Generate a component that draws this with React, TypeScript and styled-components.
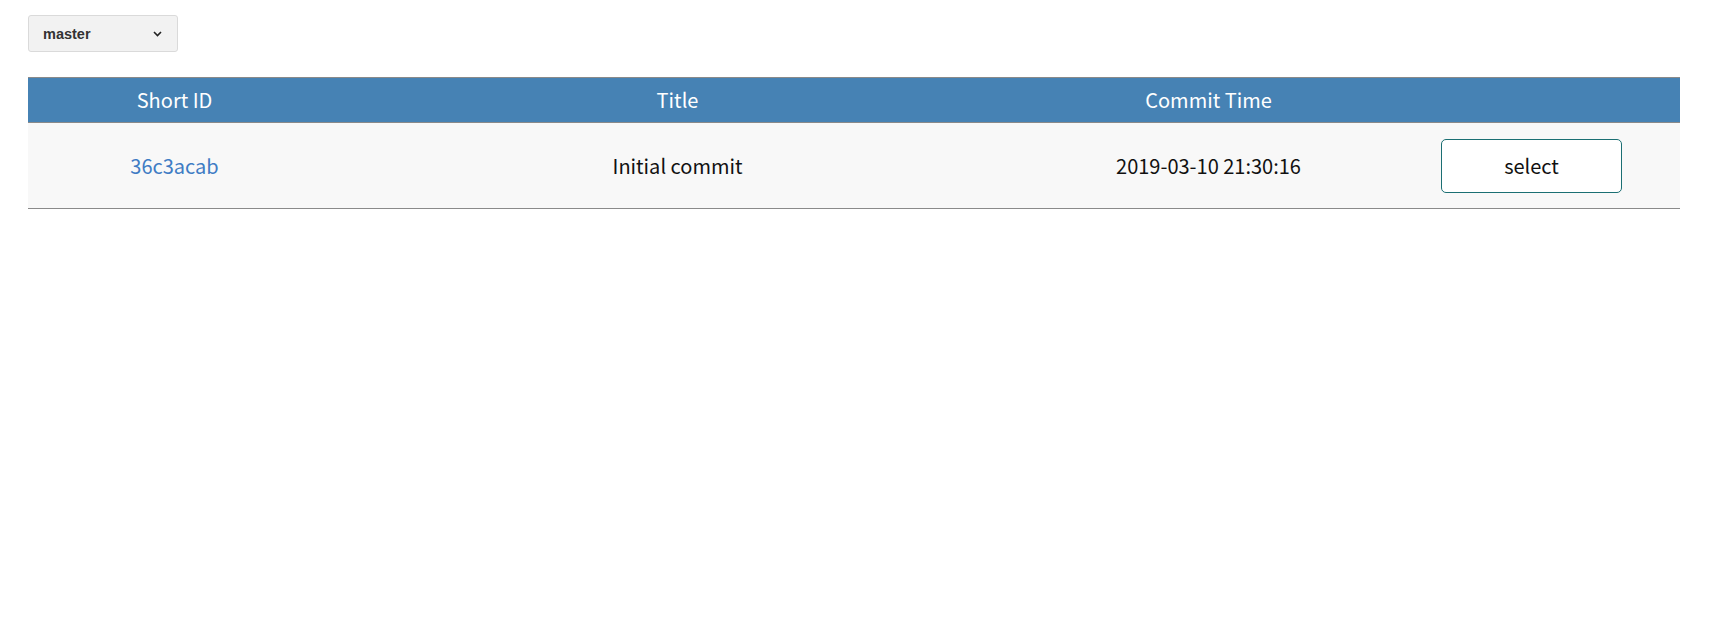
import React from "react";
import styled, { createGlobalStyle } from "styled-components";

const GlobalStyle = createGlobalStyle`
  html, body {
    margin: 0;
    padding: 0;
    background: #ffffff;
  }
  body {
    font-family: "Noto Sans CJK SC", "Noto Sans", sans-serif;
  }
`;

const COLUMNS = "293px 713px 349px 1fr";

const Page = styled.div`
  padding: 15px 34px 0 28px;
`;

const BranchSelect = styled.div`
  box-sizing: border-box;
  width: 150px;
  height: 37px;
  display: flex;
  align-items: center;
  justify-content: space-between;
  padding: 0 15px 0 14px;
  background: #f2f2f2;
  border: 1px solid #dadada;
  border-radius: 3px;
  font-family: "Liberation Sans", Arial, sans-serif;
  font-weight: 700;
  font-size: 14.5px;
  color: #333333;
`;

const Table = styled.div`
  margin-top: 25px;
  border-top: 1px solid #8a8a8a;
`;

const HeaderRow = styled.div`
  display: grid;
  grid-template-columns: ${COLUMNS};
  height: 44px;
  align-items: center;
  background: #4682b4;
  border-bottom: 1px solid #8a8a8a;
`;

const HeaderCell = styled.div`
  text-align: center;
  color: #ffffff;
  font-size: 20px;
  line-height: 1;
`;

const BodyRow = styled.div`
  display: grid;
  grid-template-columns: ${COLUMNS};
  height: 85px;
  align-items: center;
  background: #f8f8f8;
  border-bottom: 1px solid #8a8a8a;
`;

const Cell = styled.div<{ $link?: boolean }>`
  display: flex;
  justify-content: center;
  align-items: center;
  font-size: 20px;
  line-height: 1;
  color: ${(p) => (p.$link ? "#3f7cc4" : "#111111")};
`;

const SelectButton = styled.button`
  box-sizing: border-box;
  width: 181px;
  height: 54px;
  background: #ffffff;
  border: 1px solid #1b6f73;
  border-radius: 5px;
  font-family: "Noto Sans CJK SC", "Noto Sans", sans-serif;
  font-size: 20px;
  color: #111111;
  cursor: pointer;
`;

const Chevron = () => (
  <svg width="9" height="6" viewBox="0 0 9 6" fill="none">
    <path d="M1 1l3.5 3.5L8 1" stroke="#222" strokeWidth="1.6" />
  </svg>
);

export default function App() {
  return (
    <Page>
      <GlobalStyle />
      <BranchSelect>
        <span>master</span>
        <Chevron />
      </BranchSelect>
      <Table>
        <HeaderRow>
          <HeaderCell>Short ID</HeaderCell>
          <HeaderCell>Title</HeaderCell>
          <HeaderCell>Commit Time</HeaderCell>
          <HeaderCell />
        </HeaderRow>
        <BodyRow>
          <Cell $link>36c3acab</Cell>
          <Cell>Initial commit</Cell>
          <Cell>2019-03-10 21:30:16</Cell>
          <Cell>
            <SelectButton>select</SelectButton>
          </Cell>
        </BodyRow>
      </Table>
    </Page>
  );
}
